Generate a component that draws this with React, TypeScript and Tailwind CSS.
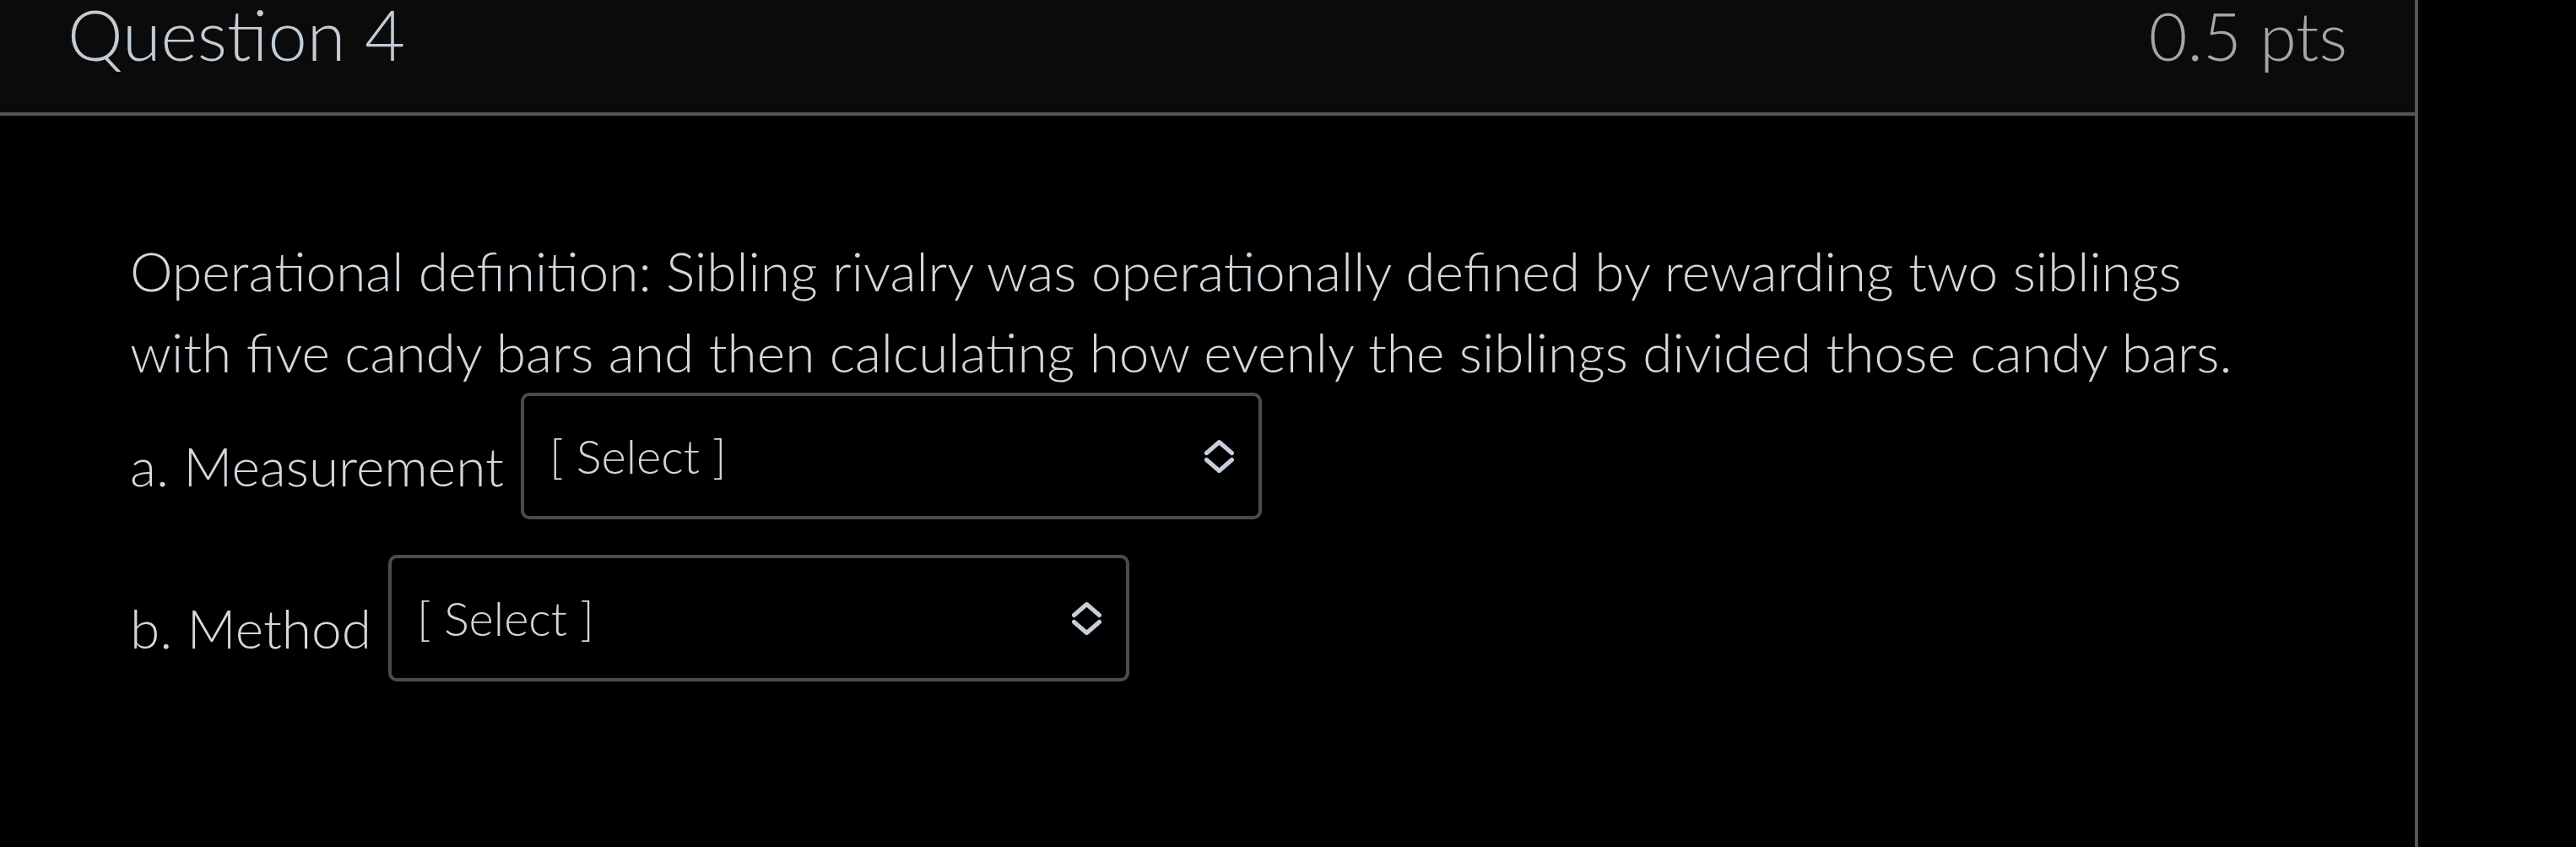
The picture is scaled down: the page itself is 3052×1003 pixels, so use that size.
type SelectBoxProps = {
  placeholder?: string;
};

// the up/down chevron pair drawn at the right of each select
function UpDownIcon() {
  return (
    <svg width="37" height="41" viewBox="0 0 37 41" fill="none" className="shrink-0">
      <polyline
        points="3.5,16.5 18.5,3.5 33.5,16.5"
        stroke="#c6cfd7"
        strokeWidth="5"
        strokeLinecap="round"
        strokeLinejoin="round"
      />
      <polyline
        points="3.5,24.5 18.5,37.5 33.5,24.5"
        stroke="#c6cfd7"
        strokeWidth="5"
        strokeLinecap="round"
        strokeLinejoin="round"
      />
    </svg>
  );
}

function SelectBox({ placeholder = "[ Select ]" }: SelectBoxProps) {
  return (
    <div className="ml-[20px] flex h-[150px] w-[878px] shrink-0 items-center justify-between rounded-[10px] border-4 border-[#4b4b4b] pl-[30px] pr-[28px]">
      <span className="text-[56px] leading-[1.2] font-light text-[#d0d7dc]">{placeholder}</span>
      <UpDownIcon />
    </div>
  );
}

export default function App() {
  return (
    <div
      className="flex h-screen w-full overflow-hidden bg-black"
      style={{ fontFamily: "Lato, 'Open Sans', sans-serif" }}
    >
      <div className="flex h-full w-[2865px] shrink-0 flex-col border-r-4 border-[#555555]">
        {/* question header */}
        <div className="flex h-[137px] shrink-0 items-start justify-between border-b-4 border-[#555555] bg-[#0b0b0b] pl-[80px] pr-[80px]">
          <h2 className="text-[83px] leading-[81px] font-light text-[#c3ccd5]">Question 4</h2>
          <span className="pt-[4px] text-[79px] leading-[76px] font-light text-[#a6a6a6]">0.5 pts</span>
        </div>

        {/* question body */}
        <div className="flex flex-col pl-[154px] pt-[136px] font-light">
          <p className="text-[64px] leading-[96px] text-[#d2d8dd]">
            <span className="block whitespace-nowrap">
              Operational definition: Sibling rivalry was operationally defined by rewarding two siblings
            </span>
            <span className="block whitespace-nowrap">
              with five candy bars and then calculating how evenly the siblings divided those candy bars.
            </span>
          </p>

          <div className="flex items-start">
            <span className="mt-[39px] text-[64px] leading-[96px] text-[#d2d8dd]">a. Measurement</span>
            <SelectBox />
          </div>

          <div className="mt-[42px] flex items-start">
            <span className="mt-[39px] text-[64px] leading-[96px] text-[#d2d8dd]">b. Method</span>
            <SelectBox />
          </div>
        </div>
      </div>
      <div className="flex-1 bg-black" />
    </div>
  );
}
